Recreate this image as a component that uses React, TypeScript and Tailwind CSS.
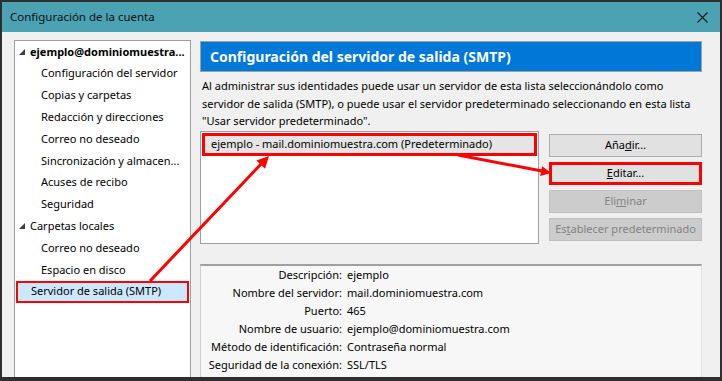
import React from 'react';

const font = { fontFamily: '"Noto Sans", "Open Sans", sans-serif' };

type TreeItem = { label: string; level: 0 | 1; bold?: boolean; selected?: boolean };

const treeItems: TreeItem[] = [
  { label: 'ejemplo@dominiomuestra...', level: 0, bold: true },
  { label: 'Configuración del servidor', level: 1 },
  { label: 'Copias y carpetas', level: 1 },
  { label: 'Redacción y direcciones', level: 1 },
  { label: 'Correo no deseado', level: 1 },
  { label: 'Sincronización y almacen...', level: 1 },
  { label: 'Acuses de recibo', level: 1 },
  { label: 'Seguridad', level: 1 },
  { label: 'Carpetas locales', level: 0 },
  { label: 'Correo no deseado', level: 1 },
  { label: 'Espacio en disco', level: 1 },
  { label: 'Servidor de salida (SMTP)', level: 0, selected: true },
];

const details: [string, string][] = [
  ['Descripción:', 'ejemplo'],
  ['Nombre del servidor:', 'mail.dominiomuestra.com'],
  ['Puerto:', '465'],
  ['Nombre de usuario:', 'ejemplo@dominiomuestra.com'],
  ['Método de identificación:', 'Contraseña normal'],
  ['Seguridad de la conexión:', 'SSL/TLS'],
];

const Expander: React.FC = () => (
  <svg width="6" height="6" viewBox="0 0 6 6" className="shrink-0">
    <polygon points="6,0 6,6 0,6" fill="#3c3c3c" />
  </svg>
);

const TreeRow: React.FC<{ item: TreeItem }> = ({ item }) => {
  if (item.selected) {
    return (
      <div className="h-[21.8px] flex items-center pl-[13px] mx-[1px] bg-[#cce8ff] border-[2.5px] border-[#ff0000]">
        <span>{item.label}</span>
      </div>
    );
  }
  return (
    <div className={`h-[21.8px] flex items-center ${item.level === 0 ? 'pl-[4px]' : 'pl-[26px]'}`}>
      {item.level === 0 && <Expander />}
      <span className={`${item.level === 0 ? 'ml-[5px]' : ''} ${item.bold ? 'font-bold' : ''}`}>{item.label}</span>
    </div>
  );
};

const Btn: React.FC<{ children: React.ReactNode; disabled?: boolean; marked?: boolean }> = ({ children, disabled, marked }) => (
  <div
    className={`h-[23px] flex items-center justify-center ${
      marked
        ? 'border-[3px] border-[#ff0000] bg-[#e1e1e1] text-black'
        : disabled
        ? 'border border-[#bfbfbf] bg-[#cccccc] text-[#838383]'
        : 'border border-[#adadad] bg-[#e1e1e1] text-black'
    }`}
  >
    {children}
  </div>
);

const App: React.FC = () => {
  return (
    <div className="relative w-[722px] h-[381px] bg-[#2e2e2e] pt-[2px] px-[2px] pb-[4px] flex flex-col text-[11px] text-black" style={font}>
      <div className="h-[30px] shrink-0 bg-[#4aa2b2] flex items-center justify-between pl-[8px] pr-[12px]">
        <span className="text-[11.5px] text-[#111]">Configuración de la cuenta</span>
        <svg width="11" height="11" viewBox="0 0 11 11">
          <path d="M0.5 0.5 L10.5 10.5 M10.5 0.5 L0.5 10.5" stroke="#1a1a1a" strokeWidth="1.1" />
        </svg>
      </div>

      <div className="flex-1 min-h-0 bg-[#f0f0f0] flex pl-[12px] pr-[18px] pt-[8px] overflow-hidden">
        <div className="w-[177px] shrink-0 bg-white border border-b-0 border-[#a0a0a0]">
          {treeItems.map((item, i) => (
            <TreeRow key={i} item={item} />
          ))}
        </div>

        <div className="ml-[9px] flex-1 flex flex-col pt-[1px]">
          <div className="h-[31px] shrink-0 bg-[#0078d7] border border-[#a0a0a0] flex items-center pl-[9px]">
            <span className="text-white font-bold text-[14px]">Configuración del servidor de salida (SMTP)</span>
          </div>

          <p className="mt-[5px] pl-[2px] leading-[17.5px]">
            Al administrar sus identidades puede usar un servidor de esta lista seleccionándolo como servidor de salida
            (SMTP), o puede usar el servidor predeterminado seleccionando en esta lista "Usar servidor predeterminado".
          </p>

          <div className="mt-[1px] h-[113px] shrink-0 flex gap-[10px]">
            <div className="w-[339px] bg-white border border-[#a0a0a0] p-[1px]">
              <div className="h-[23px] bg-[#e5e5e5] border-[3px] border-[#ff0000] flex items-center pl-[6px]">
                ejemplo - mail.dominiomuestra.com (Predeterminado)
              </div>
            </div>
            <div className="flex-1 flex flex-col gap-[5px] pt-[3px]">
              <Btn>
                <span>
                  Aña<u>d</u>ir...
                </span>
              </Btn>
              <Btn marked>
                <span>
                  <u>E</u>ditar...
                </span>
              </Btn>
              <Btn disabled>
                <span>
                  Eli<u>m</u>inar
                </span>
              </Btn>
              <Btn disabled>
                <span>
                  Es<u>t</u>ablecer predeterminado
                </span>
              </Btn>
            </div>
          </div>

          <div className="mt-[20px] flex-1 bg-[#f7f7f7] border-t-2 border-l border-r border-t-[#a0a0a0] border-l-[#d0d0d0] border-r-[#e0e0e0] pt-[1px]">
            {details.map(([label, value]) => (
              <div key={label} className="h-[18px] flex items-center">
                <span className="w-[141px] shrink-0 text-right">{label}</span>
                <span className="ml-[5px]">{value}</span>
              </div>
            ))}
          </div>
        </div>
      </div>

      <svg className="absolute inset-0 pointer-events-none" width="722" height="381" viewBox="0 0 722 381">
        <line x1="150" y1="281" x2="262" y2="163" stroke="#ff0000" strokeWidth="3" />
        <polygon points="269,156 265,168.8 256.4,160.6" fill="#ff0000" />
        <line x1="458" y1="155" x2="542" y2="171" stroke="#ff0000" strokeWidth="3" />
        <polygon points="551,173 540.2,176 542.2,166.2" fill="#ff0000" />
      </svg>
    </div>
  );
};

export default App;
